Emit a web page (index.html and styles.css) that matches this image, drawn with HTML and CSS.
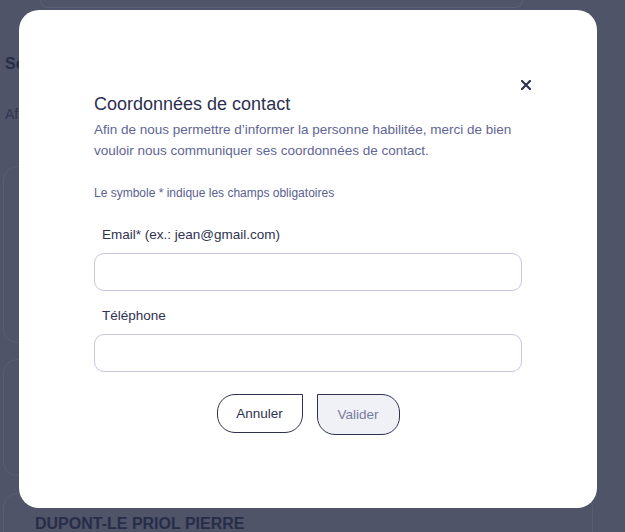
FILE: index.html
```html
<!DOCTYPE html>
<html lang="fr">
<head>
<meta charset="utf-8">
<title>Coordonnées de contact</title>
<link rel="stylesheet" href="styles.css">
</head>
<body>
<div class="page">
  <div class="top-card"></div>
  <h2 class="page-title">Sélection</h2>
  <p class="page-text">Afin de</p>
  <div class="card card-1"></div>
  <div class="card card-2"></div>
  <div class="card card-3"><span class="card-name">DUPONT-LE PRIOL PIERRE</span></div>
</div>

<div class="modal" role="dialog" aria-labelledby="modal-title">
  <button class="close" aria-label="Fermer">
    <svg width="10" height="10" viewBox="0 0 10 10"><path d="M1 1 L9 9 M9 1 L1 9" stroke="#2e3250" stroke-width="2.2" stroke-linecap="square"/></svg>
  </button>
  <h1 id="modal-title" class="modal-title">Coordonnées de contact</h1>
  <p class="intro">Afin de nous permettre d’informer la personne habilitée, merci de bien vouloir nous communiquer ses coordonnées de contact.</p>
  <p class="required-note">Le symbole * indique les champs obligatoires</p>
  <div class="field">
    <label class="label" for="email">Email* (ex.: jean@gmail.com)</label>
    <input class="input" id="email" type="text">
  </div>
  <div class="field">
    <label class="label" for="tel">Téléphone</label>
    <input class="input" id="tel" type="text">
  </div>
  <div class="actions">
    <button class="btn btn-cancel">Annuler</button>
    <button class="btn btn-submit">Valider</button>
  </div>
</div>
</body>
</html>
```

FILE: styles.css
```css
html, body {
  margin: 0;
  padding: 0;
  height: 100%;
  overflow: hidden;
}
body {
  background: #4f5468;
  font-family: "Liberation Sans", Arial, sans-serif;
}
.page {
  padding: 0 30px 0 3px;
}
.top-card {
  height: 7px;
  margin: 0 72px 0 37px;
  border: 1px solid #5a6075;
  border-top: none;
  border-radius: 0 0 30px 30px;
}
.page-title {
  margin: 46px 0 0 2px;
  font-size: 16px;
  line-height: 20px;
  font-weight: bold;
  color: #272d48;
  white-space: nowrap;
}
.page-text {
  margin: 30px 0 0 2px;
  font-size: 14px;
  line-height: 20px;
  color: #2f3652;
  white-space: nowrap;
}
.card {
  border: 1px solid #585e73;
  border-radius: 14px;
  width: 590px;
  box-sizing: border-box;
}
.card-1 { margin-top: 42px; height: 177px; }
.card-2 { margin-top: 16px; height: 117px; }
.card-3 { margin-top: 17px; height: 60px; padding: 20px 0 0 31px; }
.card-name {
  font-size: 16px;
  line-height: 20px;
  font-weight: bold;
  color: #272d48;
}

.modal {
  position: fixed;
  left: 19px;
  top: 10px;
  width: 578px;
  height: 498px;
  box-sizing: border-box;
  background: #ffffff;
  border-radius: 20px;
  padding: 83px 75px 0 75px;
}
.close {
  position: absolute;
  right: 64px;
  top: 68px;
  width: 14px;
  height: 14px;
  padding: 0;
  border: none;
  background: none;
  display: flex;
  align-items: center;
  justify-content: center;
  cursor: pointer;
}
.modal-title {
  margin: 0;
  font-size: 18px;
  font-weight: normal;
  color: #2c3050;
  line-height: 22px;
}
.intro {
  margin: 4px 0 0 0;
  font-size: 13.5px;
  line-height: 21px;
  color: #5f6596;
}
.required-note {
  margin: 24px 0 0 0;
  font-size: 12px;
  line-height: 16px;
  color: #5a6090;
}
.field {
  display: flex;
  flex-direction: column;
  margin-top: 25px;
}
.field + .field { margin-top: 16px; }
.label {
  font-size: 13.5px;
  line-height: 18px;
  color: #2e3250;
  padding-left: 8px;
  margin-bottom: 9px;
}
.input {
  height: 38px;
  box-sizing: border-box;
  border: 1px solid #c6c7dc;
  border-radius: 10px;
  background: #fff;
  font: inherit;
}
.actions {
  display: flex;
  justify-content: center;
  gap: 14px;
  margin-top: 22px;
}
.btn {
  font-family: "Liberation Sans", Arial, sans-serif;
  font-size: 13.5px;
  border: 1px solid #2e3250;
  padding: 0;
  cursor: pointer;
}
.btn-cancel {
  width: 86px;
  height: 39px;
  background: #fff;
  color: #2e3250;
  border-radius: 18px 0 18px 18px;
}
.btn-submit {
  width: 83px;
  height: 41px;
  background: #f0f1f6;
  color: #777c9f;
  border-radius: 0 18px 18px 18px;
}
```
